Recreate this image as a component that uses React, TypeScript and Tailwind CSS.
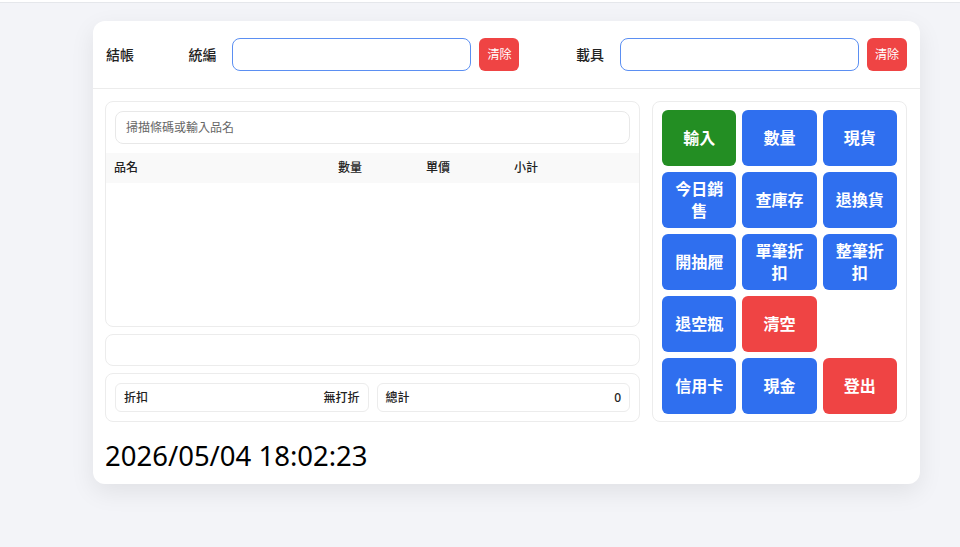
import React from 'react';

const font = { fontFamily: '"Noto Sans", "Noto Sans CJK TC", sans-serif' };

type Btn = { label: string; color: 'blue' | 'green' | 'red' | 'none' };

const buttons: Btn[] = [
  { label: '輸入', color: 'green' },
  { label: '數量', color: 'blue' },
  { label: '現貨', color: 'blue' },
  { label: '今日銷售', color: 'blue' },
  { label: '查庫存', color: 'blue' },
  { label: '退換貨', color: 'blue' },
  { label: '開抽屜', color: 'blue' },
  { label: '單筆折扣', color: 'blue' },
  { label: '整筆折扣', color: 'blue' },
  { label: '退空瓶', color: 'blue' },
  { label: '清空', color: 'red' },
  { label: '', color: 'none' },
  { label: '信用卡', color: 'blue' },
  { label: '現金', color: 'blue' },
  { label: '登出', color: 'red' },
];

const colorClass: Record<Btn['color'], string> = {
  blue: 'bg-[#2f6fef] text-white',
  green: 'bg-[#238e23] text-white',
  red: 'bg-[#ef4444] text-white',
  none: '',
};

const FieldGroup: React.FC<{ label: string }> = ({ label }) => (
  <div className="flex items-center w-[331px]">
    <span className="w-[44px] text-[14px] font-medium text-[#222]">{label}</span>
    <input className="w-[239px] h-[33px] rounded-lg border border-[#5b8ff2] outline-none px-2 text-sm" />
    <button className="ml-2 w-[40px] h-[33px] rounded-md bg-[#ef4444] text-white text-[12px]">清除</button>
  </div>
);

export default function App() {
  return (
    <div className="min-h-screen bg-[#f3f4f8]" style={font}>
      <div className="h-[3px] bg-white border-b border-[#e5e7eb]" />
      <div className="ml-[93px] mt-[18px] w-[827px] bg-white rounded-xl shadow-[0_8px_24px_rgba(0,0,0,0.08)]">
        {/* header */}
        <div className="flex items-center px-[13px] h-[68px] border-b border-[#ececec]">
          <span className="w-[83px] text-[14px] font-medium text-[#222]">結帳</span>
          <FieldGroup label="統編" />
          <div className="w-[57px]" />
          <FieldGroup label="載具" />
        </div>

        <div className="px-3 pt-3 pb-[11px]">
          <div className="flex gap-3">
            {/* left column */}
            <div className="w-[535px] flex flex-col gap-[7px]">
              <div className="h-[226px] rounded-lg border border-[#ececec] overflow-hidden">
                <div className="p-[9px]">
                  <input
                    placeholder="掃描條碼或輸入品名"
                    className="w-full h-[33px] rounded-lg border border-[#e8e8e8] px-[10px] text-[12px] outline-none placeholder:text-[#666]"
                  />
                </div>
                <div className="grid grid-cols-[224px_88px_88px_88px_1fr] h-[30px] items-center bg-[#f9f9f9] text-[12px] font-medium text-[#222]">
                  <span className="px-2">品名</span>
                  <span className="px-2">數量</span>
                  <span className="px-2">單價</span>
                  <span className="px-2">小計</span>
                  <span />
                </div>
              </div>
              <div className="h-[32px] rounded-lg border border-[#ececec]" />
              <div className="h-[49px] rounded-lg border border-[#ececec] p-[9px] flex gap-2">
                <div className="flex-1 flex items-center justify-between rounded-md border border-[#ececec] px-2 text-[12px] font-medium text-[#222]">
                  <span>折扣</span>
                  <span>無打折</span>
                </div>
                <div className="flex-1 flex items-center justify-between rounded-md border border-[#ececec] px-2 text-[12px] font-medium text-[#222]">
                  <span>總計</span>
                  <span>0</span>
                </div>
              </div>
            </div>

            {/* right column */}
            <div className="w-[255px] rounded-lg border border-[#ececec] pt-[8px] pb-[6px] px-[9px]">
              <div className="grid grid-cols-3 gap-[6px]">
                {buttons.map((b, i) =>
                  b.color === 'none' ? (
                    <div key={i} />
                  ) : (
                    <button
                      key={i}
                      className={`h-[56px] rounded-md px-3 text-[16px] font-bold leading-[22px] ${colorClass[b.color]}`}
                    >
                      {b.label}
                    </button>
                  )
                )}
              </div>
            </div>
          </div>

          <div className="mt-[17px] text-[27.5px] leading-[34px] text-black">2026/05/04 18:02:23</div>
        </div>
      </div>
    </div>
  );
}
